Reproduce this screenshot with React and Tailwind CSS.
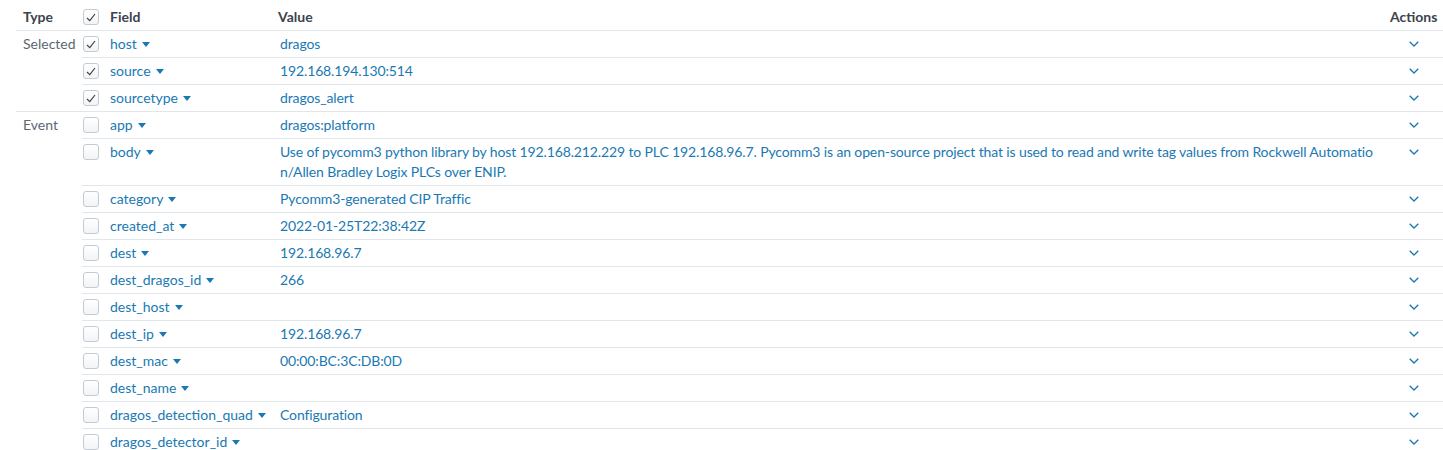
import React from "react";

const Check = ({ checked }) => (
  <div className="w-4 h-4 rounded-[3px] border border-[#c3cbd4] bg-gradient-to-b from-white to-[#f2f4f5] flex items-center justify-center">
    {checked && (
      <svg width="10" height="9" viewBox="0 0 10 9" fill="none">
        <path d="M1 5 L3.8 7.6 L9 1" stroke="#3c444d" strokeWidth="1.2" />
      </svg>
    )}
  </div>
);

const Caret = () => (
  <svg width="8" height="5" viewBox="0 0 8 5" className="ml-[5px] shrink-0">
    <path d="M0 0 L8 0 L4 5 Z" fill="#1a79b3" />
  </svg>
);

const Chevron = () => (
  <svg width="10" height="6" viewBox="0 0 10 6" fill="none">
    <path d="M0.7 0.7 L5 5 L9.3 0.7" stroke="#1a79b3" strokeWidth="1.3" />
  </svg>
);

const groups = [
  {
    type: "Selected",
    rows: [
      { f: "host", v: "dragos", c: true },
      { f: "source", v: "192.168.194.130:514", c: true },
      { f: "sourcetype", v: "dragos_alert", c: true },
    ],
  },
  {
    type: "Event",
    rows: [
      { f: "app", v: "dragos:platform" },
      {
        f: "body",
        v: [
          "Use of pycomm3 python library by host 192.168.212.229 to PLC 192.168.96.7. Pycomm3 is an open-source project that is used to read and write tag values from Rockwell Automatio",
          "n/Allen Bradley Logix PLCs over ENIP.",
        ],
      },
      { f: "category", v: "Pycomm3-generated CIP Traffic" },
      { f: "created_at", v: "2022-01-25T22:38:42Z" },
      { f: "dest", v: "192.168.96.7" },
      { f: "dest_dragos_id", v: "266" },
      { f: "dest_host", v: "" },
      { f: "dest_ip", v: "192.168.96.7" },
      { f: "dest_mac", v: "00:00:BC:3C:DB:0D" },
      { f: "dest_name", v: "" },
      { f: "dragos_detection_quad", v: "Configuration" },
      { f: "dragos_detector_id", v: "" },
    ],
  },
];

export default function App() {
  return (
    <div
      className="w-[1443px] h-[450px] overflow-hidden bg-white pl-4 text-[14px] leading-5"
      style={{ fontFamily: "Lato, 'Open Sans', sans-serif" }}
    >
      <div className="flex items-center h-[31px] pt-[4px] border-b border-[#e1e6eb] font-bold text-[#3c444d]">
        <div className="w-[66px] pl-[7px]">Type</div>
        <div className="w-[28px] pl-[1px]">
          <Check checked />
        </div>
        <div className="w-[168px]">Field</div>
        <div className="flex-1">Value</div>
        <div className="w-[47px] mr-[6px] text-center">Actions</div>
      </div>
      {groups.map((g) => (
        <div key={g.type} className="flex border-b border-[#e1e6eb]">
          <div className="w-[66px] pl-[7px] py-[3px] text-[#5c6773]">{g.type}</div>
          <div className="flex-1 flex flex-col">
            {g.rows.map((r, i) => (
              <div
                key={r.f}
                className={
                  "flex py-[3px] " +
                  (i < g.rows.length - 1 ? "border-b border-[#e1e6eb]" : "")
                }
              >
                <div className="w-[28px] pl-[1px] pt-[2px]">
                  <Check checked={r.c} />
                </div>
                <div className="w-[170px] flex items-center h-5 text-[#1a79b3] whitespace-nowrap">
                  {r.f}
                  <Caret />
                </div>
                <div className="flex-1 pr-[10px] text-[#1a79b3] whitespace-nowrap tracking-[-0.13px]">
                  {Array.isArray(r.v)
                    ? r.v.map((line) => (
                        <div key={line}>{line}</div>
                      ))
                    : r.v}
                </div>
                <div className="w-[47px] mr-[6px] h-5 flex items-center justify-center">
                  <Chevron />
                </div>
              </div>
            ))}
          </div>
        </div>
      ))}
    </div>
  );
}
